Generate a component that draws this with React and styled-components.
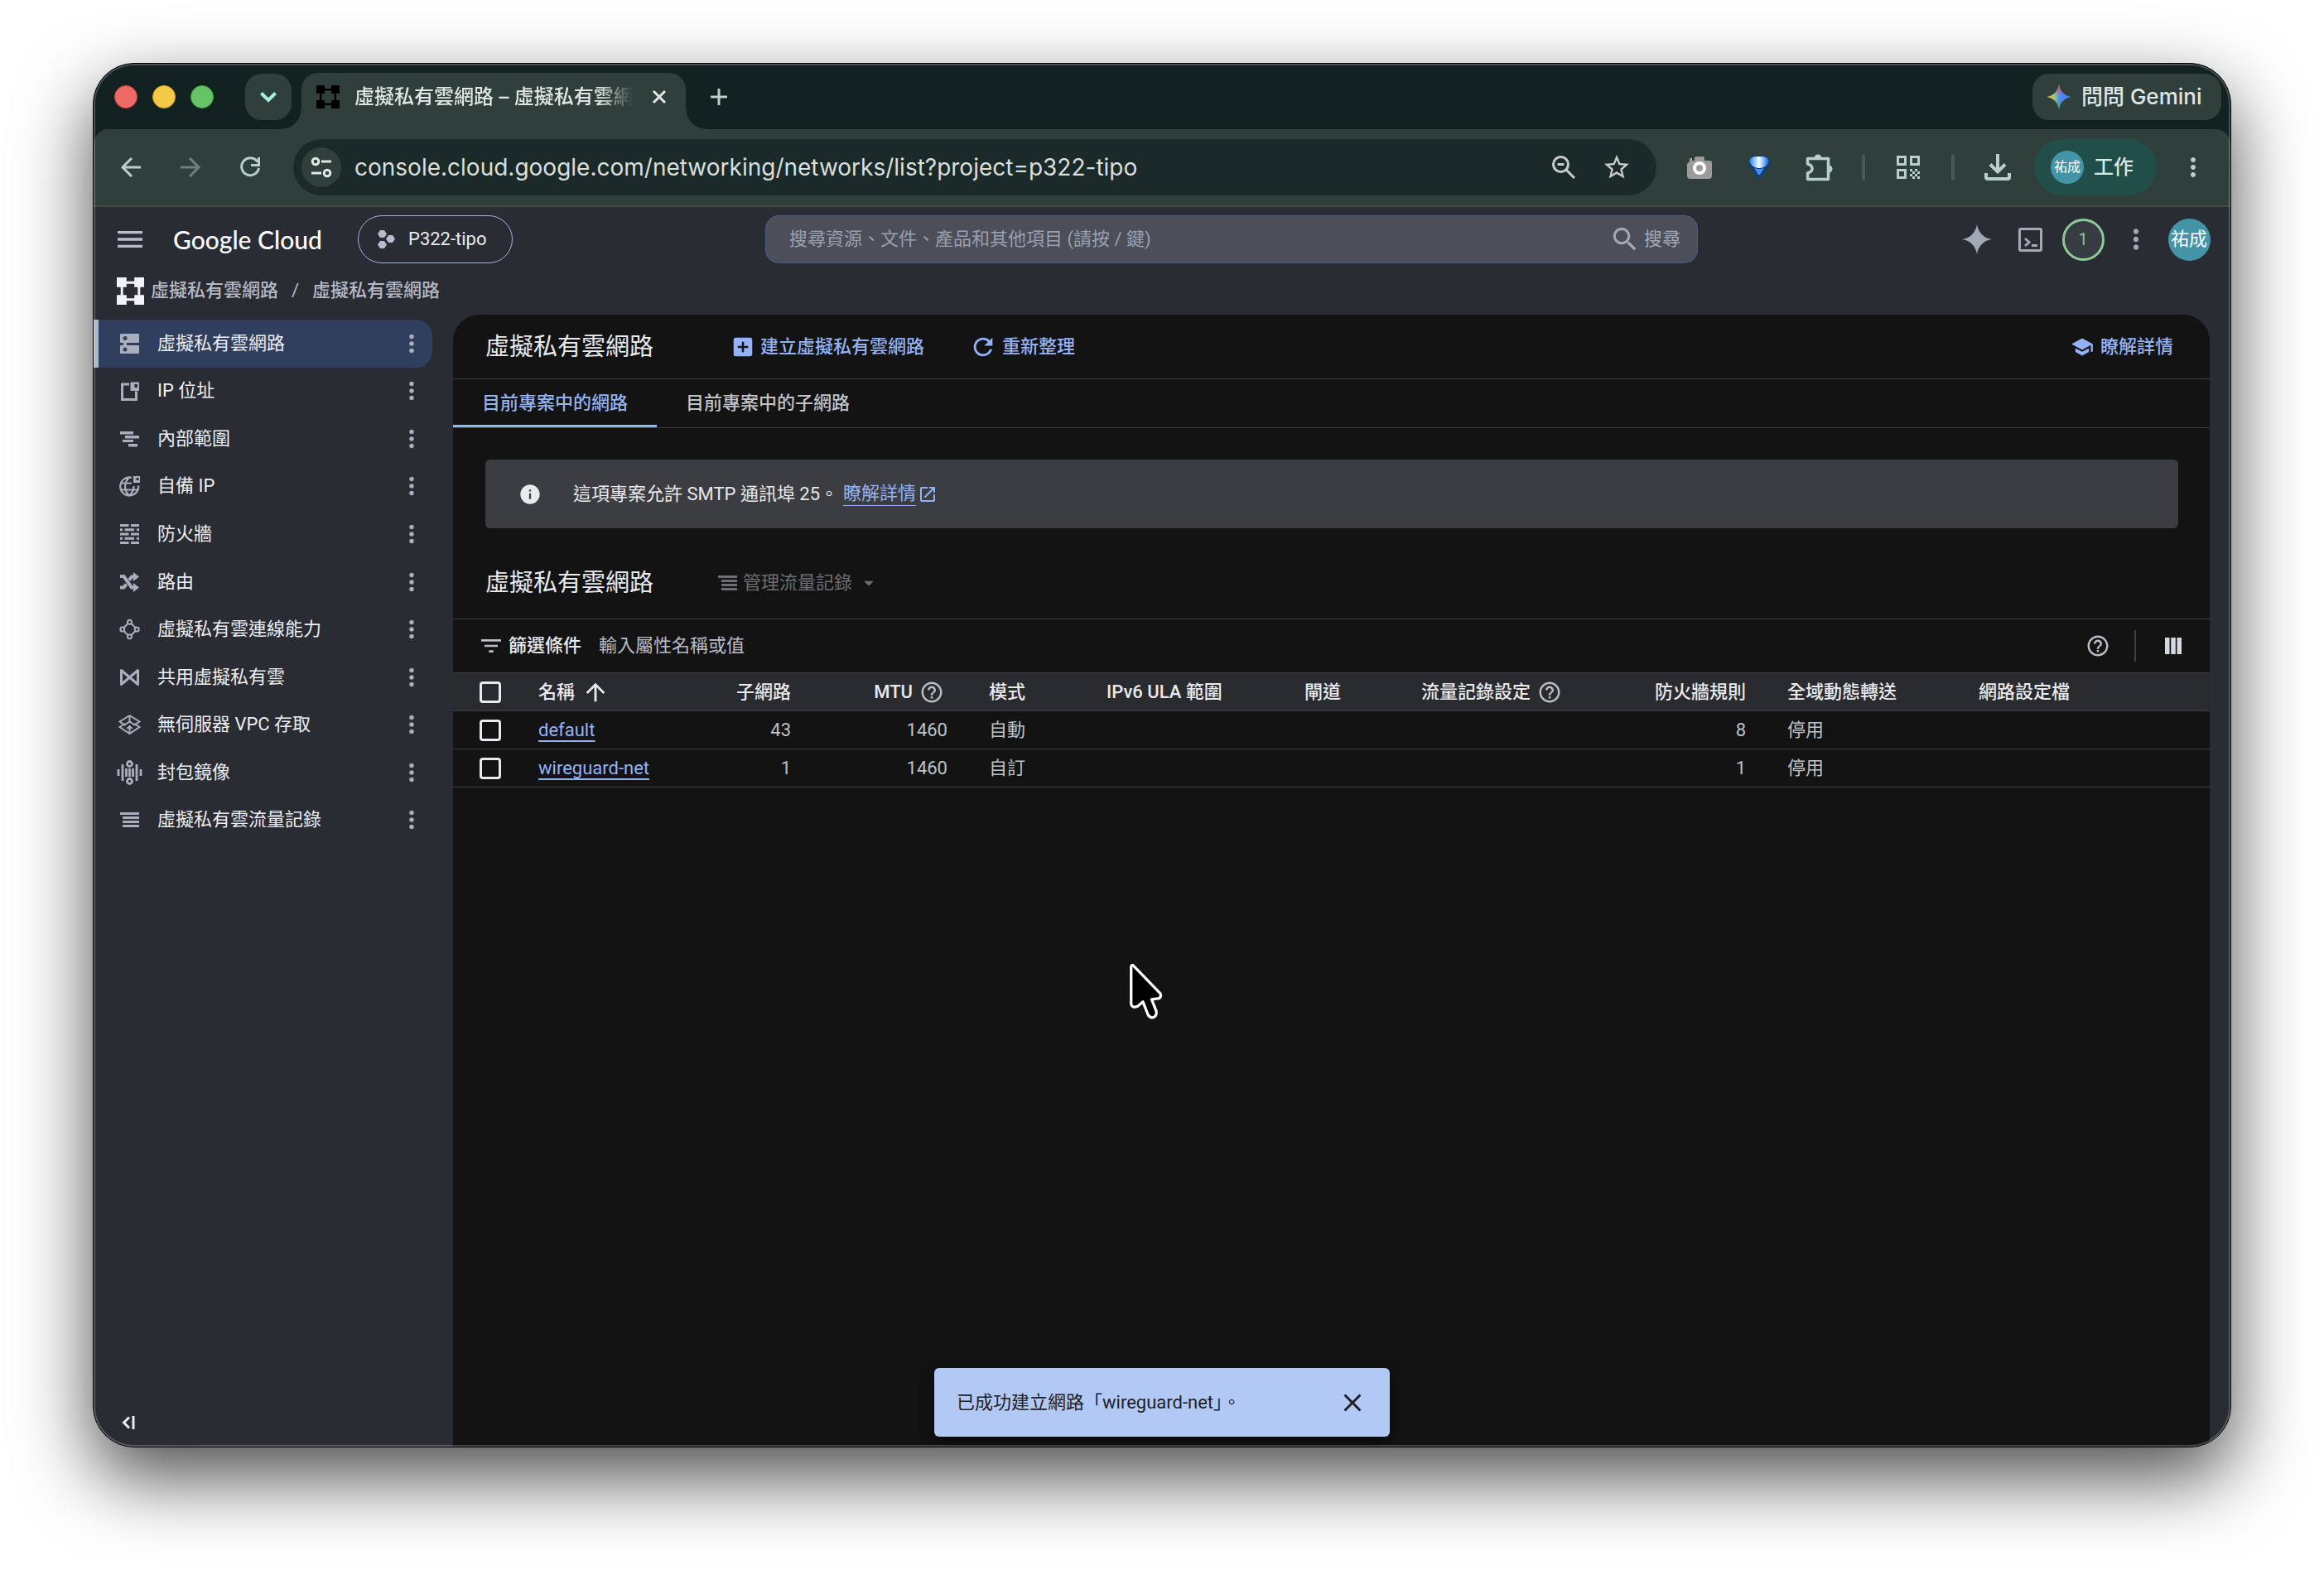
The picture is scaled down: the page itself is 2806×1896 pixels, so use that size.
import React from 'react';
import styled, { createGlobalStyle, css } from 'styled-components';
import {
  MdAddBox,
  MdArrowDropDown,
  MdArrowUpward,
  MdClose,
  MdFilterList,
  MdHelpOutline,
  MdInfo,
  MdMenu,
  MdMoreVert,
  MdOpenInNew,
  MdRefresh,
  MdSchool,
  MdSearch,
  MdStarOutline,
} from 'react-icons/md';

const GlobalStyle = createGlobalStyle`
  * {
    box-sizing: border-box;
  }
  body {
    margin: 0;
    background: #ffffff;
    font-family: Roboto, 'Noto Sans CJK TC', sans-serif;
    font-size: 22px;
    line-height: 32px;
    color: #e8eaed;
  }
  button, input {
    font: inherit;
    color: inherit;
    background: none;
    border: 0;
    padding: 0;
    margin: 0;
    outline: none;
  }
  button {
    cursor: pointer;
  }
  svg {
    display: block;
    flex: none;
  }
`;

/* ---------- icons ---------- */

const VpcIcon = ({ size }) => (
  <svg width={size} height={size} viewBox="0 0 28 28" fill="currentColor">
    <path d="M0 0h10v4h8V0h10v10h-4v8h4v10H18v-4h-8v4H0V18h4v-8H0zM10 6.500v3.500H6.500v8H10v3.500h8V18h3.500v-8H18V6.500z" fillRule="evenodd" />
  </svg>
);

const ChevronIcon = () => (
  <svg width="20" height="14" viewBox="0 0 20 14" fill="none" stroke="#a5f0e2" strokeWidth="4">
    <path d="M1.500 2.500 10 11l8.500-8.500" />
  </svg>
);

const PlusIcon = () => (
  <svg width="22" height="22" viewBox="0 0 22 22" fill="none" stroke="#b9cdc9" strokeWidth="3">
    <path d="M11 1v20M1 11h20" />
  </svg>
);

const CrossIcon = () => (
  <svg width="18" height="18" viewBox="0 0 18 18" fill="none" stroke="#e1e6e4" strokeWidth="3">
    <path d="m2 2 14 14M16 2 2 16" />
  </svg>
);

const sparkPath = 'M18 0c1.500 9.500 8 16.500 18 18-10 1.500-16.500 8.500-18 18C16.500 26.500 10 19.500 0 18 10 16.500 16.500 9.500 18 0z';

const SparkIcon = () => (
  <svg width="36" height="36" viewBox="0 0 36 36" fill="currentColor">
    <path d={sparkPath} />
  </svg>
);

const GeminiIcon = () => (
  <svg width="30" height="30" viewBox="0 0 36 36">
    <defs>
      <linearGradient id="sparkBase" x1="0" y1="0.500" x2="1" y2="0.500">
        <stop offset="0" stopColor="#fbbc04" />
        <stop offset="0.300" stopColor="#9ccb7a" />
        <stop offset="0.550" stopColor="#4f86f7" />
        <stop offset="1" stopColor="#3f7cf5" />
      </linearGradient>
      <linearGradient id="sparkTop" x1="0" y1="0" x2="0" y2="1">
        <stop offset="0" stopColor="#f2453c" />
        <stop offset="0.420" stopColor="#f2453c" stopOpacity="0" />
      </linearGradient>
      <linearGradient id="sparkBottom" x1="0" y1="1" x2="0" y2="0">
        <stop offset="0" stopColor="#34a853" />
        <stop offset="0.400" stopColor="#34a853" stopOpacity="0" />
      </linearGradient>
    </defs>
    <path d={sparkPath} fill="url(#sparkBase)" />
    <path d={sparkPath} fill="url(#sparkTop)" />
    <path d={sparkPath} fill="url(#sparkBottom)" />
  </svg>
);

const BackIcon = () => (
  <svg width="26" height="24" viewBox="0 0 26 24" fill="none" stroke="currentColor" strokeWidth="3">
    <path d="M25 12H3M14 1 3 12l11 11" />
  </svg>
);

const ForwardIcon = () => (
  <svg width="26" height="24" viewBox="0 0 26 24" fill="none" stroke="currentColor" strokeWidth="3">
    <path d="M1 12h22M12 1l11 11-11 11" />
  </svg>
);

const ReloadIcon = () => (
  <svg width="26" height="26" viewBox="0 0 26 26" fill="none" stroke="currentColor" strokeWidth="3">
    <path d="M22 6.500A10.500 10.500 0 1 0 23.500 14M23.500 1v9.500H14" />
  </svg>
);

const TuneIcon = () => (
  <svg width="26" height="26" viewBox="0 0 26 26" fill="none" stroke="#e1e6e4" strokeWidth="3">
    <circle cx="6" cy="6" r="3.800" />
    <path d="M13 6h12M1 20h12" />
    <circle cx="20" cy="20" r="3.800" />
  </svg>
);

const ZoomOutIcon = () => (
  <svg width="28" height="28" viewBox="0 0 28 28" fill="none" stroke="#c7cac8" strokeWidth="3">
    <circle cx="10.500" cy="10.500" r="9" />
    <path d="M17 17l10 10M6.500 10.500h8" />
  </svg>
);

const CameraIcon = () => (
  <svg width="32" height="28" viewBox="0 0 32 28">
    <path fill="#9b9c9c" d="M4 3h3v3h3V3q0-2 2-2h8q2 0 2 2v3h6q3 0 3 3v15q0 4-4 4H5q-4 0-4-4V10l3-3z" />
    <circle cx="16" cy="15" r="6" fill="#9b9c9c" stroke="#ffffff" strokeWidth="4" />
  </svg>
);

const BalloonIcon = () => (
  <svg width="28" height="30" viewBox="0 0 28 30">
    <defs>
      <linearGradient id="balloon" x1="0" y1="0" x2="1" y2="0">
        <stop offset="0" stopColor="#1f74dc" />
        <stop offset="0.250" stopColor="#8fc6fb" />
        <stop offset="0.500" stopColor="#f4faff" />
        <stop offset="0.700" stopColor="#8cc6fa" />
        <stop offset="1" stopColor="#1258c4" />
      </linearGradient>
    </defs>
    <path fill="#0d3a86" d="M1 8C1 3 7 1 14 1s13 2 13 7c0 7-7 11-10 17l-1 4h-4l-1-4C8 19 1 15 1 8z" />
    <path fill="url(#balloon)" d="M2 8c0-5 6-6 12-6s12 1 12 6c-3 6-7 8-12 8S5 14 2 8z" />
    <path fill="#3d8ff0" d="M8 16q6 2 12 0l-5 8h-2z" />
  </svg>
);

const PuzzleIcon = () => (
  <svg width="34" height="34" viewBox="0 0 34 34" fill="none" stroke="#b9cdc9" strokeWidth="3.500" strokeLinejoin="round">
    <path d="M3.500 6.500h25v25h-25v-7.500q5.500-1.500 5.500-5.500t-5.500-5.500z" />
    <path fill="#b9cdc9" stroke="none" d="M11.500 6a4.500 4.500 0 0 1 9 0zM29 14.500a4.500 4.500 0 0 1 0 9z" />
  </svg>
);

const QrIcon = () => (
  <svg width="28" height="28" viewBox="0 0 28 28" fill="#b9cdc9">
    <path fillRule="evenodd" d="M0 0h12v12H0zM3 3v6h6V3zM16 0h12v12H16zM19 3v6h6V3zM0 16h12v12H0zM3 19v6h6v-6z" />
    <path d="M16 16h3v3h-3zM22 16h3v3h-3zM19 19h3v3h-3zM25 19h3v3h-3zM16 22h3v3h-3zM22 22h3v3h-3zM19 25h3v3h-3zM25 25h3v3h-3z" />
  </svg>
);

const DownloadIcon = () => (
  <svg width="32" height="32" viewBox="0 0 32 32" fill="none" stroke="#b9cdc9" strokeWidth="4">
    <path d="M16 0v21M7 12.500l9 9 9-9M2 23v5q0 2 2 2h24q2 0 2-2v-5" />
  </svg>
);

const ProjectIcon = () => (
  <svg width="21" height="24" viewBox="0 0 21 24" fill="#b8bccb">
    <path d="M3 1h5l3 4.500L8 10H3L0 5.500zM3 14h5l3 4.500L8 23H3l-3-4.500zM13 7h5l3 4.500-3 4.500h-5l-3-4.500z" />
  </svg>
);

const ShellIcon = () => (
  <svg width="29" height="29" viewBox="0 0 29 29" fill="none" stroke="currentColor" strokeWidth="3">
    <rect x="1.500" y="1.500" width="26" height="26" rx="1.500" />
    <path d="M8 13l5 4.500L8 22M16 21.500h7" />
  </svg>
);

const ListLinesIcon = () => (
  <svg width="24" height="24" viewBox="0 0 24 24" fill="currentColor">
    <path d="M0 3h23v3H0zM4 8h19v3H4zM4 13h19v3H4zM4 18h19v3H4z" />
  </svg>
);

const ColumnsIcon = () => (
  <svg width="20" height="20" viewBox="0 0 20 20" fill="#d5d8de">
    <path d="M0 0h5.500v20H0zM7.300 0h5.500v20H7.300zM14.500 0H20v20h-5.500z" />
  </svg>
);

const CollapseIcon = () => (
  <svg width="16" height="16" viewBox="0 0 16 16" fill="none" stroke="#e8eaed" strokeWidth="3">
    <path d="M9 1.500 2.500 8 9 14.500M14 0v16" />
  </svg>
);

const PointerIcon = () => (
  <svg width="42" height="69" viewBox="644 80 102 170">
    <path
      d="M650 90q1-5 6-3l81 84q4 7-3 14l-23 3 14 36q2 14-10 18-11 1-15-9l-15-38-16 14q-15 6-19-6z"
      fill="#000000"
      stroke="#ffffff"
      strokeWidth="8"
      strokeLinejoin="round"
    />
  </svg>
);

const navIcons = {
  networks: <path fill="currentColor" fillRule="evenodd" d="M2 0h21q1 0 1 1v9q0 1-1 1H9v3h14q1 0 1 1v8q0 1-1 1H2q-1 0-1-1v-8q0-1 1-1h3v-3H2q-1 0-1-1V1q0-1 1-1zM7 3a2.500 2.500 0 1 0 0 5 2.500 2.500 0 0 0 0-5zM7 16.500a2.500 2.500 0 1 0 0 5 2.500 2.500 0 0 0 0-5z" />,
  addresses: (
    <>
      <path fill="none" stroke="currentColor" strokeWidth="3" d="M12 4H3.500v18.500h17V12.500" />
      <path fill="currentColor" fillRule="evenodd" d="M13.500 1.500H24V12H13.500zM18.500 4v4h3.500V4z" />
    </>
  ),
  ranges: <path fill="currentColor" d="M1 3h16v3.500H1zM7 8h17v3.500H7zM4 13h13v3H4zM11 18h11v3.500H11z" />,
  byoip: (
    <>
      <g fill="none" stroke="currentColor" strokeWidth="2.200">
        <path d="M15 1.800A11 11 0 1 0 23.200 11.500M3 8.500h12M3 16.500h19M12 1.500c-6.500 6-6.500 16 0 22 4.500-4 5.500-7.500 5.500-11.500" />
      </g>
      <path fill="currentColor" fillRule="evenodd" d="M17 0h8v8h-8zM20.500 2v3h3V2z" />
    </>
  ),
  firewall: <path fill="currentColor" d="M1 0h10.500v3H1zM14 0h10v3H14zM1 5.200h3v3H1zM6.500 5.200H18v3H6.500zM21 5.200h3v3h-3zM1 10.500h10.500v3H1zM14 10.500h10v3H14zM1 15.700h3v3H1zM6.500 15.700H18v3H6.500zM21 15.700h3v3h-3zM1 21h10.500v3H1zM14 21h10v3H14z" />,
  routes: (
    <g fill="none" stroke="currentColor" strokeWidth="4">
      <path d="M1 5h4.500l9.500 13.500h3M1 18.500h4.500l3-4M12 9.500 15 5.500h4" />
      <path fill="currentColor" stroke="none" d="M17 0l7 5.500-7 5.500zM17 13l7 5.500-7 5.500z" />
    </g>
  ),
  connectivity: (
    <g fill="none" stroke="currentColor" strokeWidth="2">
      <circle cx="12.500" cy="3.300" r="2.500" />
      <circle cx="12.500" cy="20.700" r="2.500" />
      <circle cx="3.800" cy="12" r="2.500" />
      <circle cx="21.200" cy="12" r="2.500" />
      <path d="M5.500 10 10.500 5M14.500 5l5 5M5.500 14l5 5M14.500 19l5-5" />
    </g>
  ),
  shared: <path fill="none" stroke="currentColor" strokeWidth="3" strokeLinejoin="round" d="M2.500 3.500v17l20-17v17z" />,
  serverless: (
    <g fill="none" stroke="currentColor" strokeWidth="2">
      <path d="M7 11 0.500 15l12 8 12-8L18 11M12.500 1 0.500 8.500l7 4.500M12.500 1l12 7.500-7 4.500M12.500 1v7.500M7 12l5.500-3.500L18 12M12.500 22v-8M9.500 17l3-3 3 3" />
    </g>
  ),
  mirroring: (
    <g fill="none" stroke="currentColor" strokeWidth="2.800">
      <circle cx="12.500" cy="1.500" r="3" />
      <circle cx="12.500" cy="22.500" r="3" />
      <path d="M-1 8v8M4 2v20M8.500 7v10M12.500 7v10M16.500 7v10M21 2v20M26 8v8" />
    </g>
  ),
  logs: <path fill="currentColor" d="M1 3h23v3H1zM4 8h20v3H4zM4 13h20v3H4zM4 18h20v3H4z" />,
};

/* ---------- window and tab strip ---------- */

const Desktop = styled.div`
  min-height: 100vh;
  padding: 76px 112px 148px;
  display: flex;
`;

const Window = styled.div`
  position: relative;
  flex: 1;
  min-width: 0;
  display: flex;
  flex-direction: column;
  border: 1px solid #000000;
  border-radius: 50px;
  background: #112220;
  box-shadow: 0 36px 90px rgba(0, 0, 0, 0.7);
  overflow: hidden;
  &::after {
    content: '';
    position: absolute;
    inset: 0;
    border: 2px solid rgba(255, 255, 255, 0.22);
    border-radius: 49px;
    pointer-events: none;
  }
`;

const TabStrip = styled.div`
  display: flex;
  align-items: center;
  height: 79px;
  padding: 0 11px 0 25px;
`;

const Lights = styled.div`
  display: flex;
  gap: 18px;
`;

const Light = styled.button`
  width: 28px;
  height: 28px;
  border-radius: 50%;
  border: 1px solid ${(p) => p.$edge};
  background: ${(p) => p.$color};
`;

const TabSearch = styled.button`
  width: 56px;
  height: 56px;
  margin: 0 12px 0 38px;
  border-radius: 20px;
  background: #2f403c;
  display: flex;
  align-items: center;
  justify-content: center;
`;

const flare = css`
  content: '';
  position: absolute;
  bottom: 0;
  width: 24px;
  height: 24px;
`;

const BrowserTab = styled.div`
  position: relative;
  align-self: flex-end;
  width: 464px;
  height: 68px;
  padding: 0 20px 10px 18px;
  display: flex;
  align-items: center;
  border-radius: 20px 20px 0 0;
  background: #2f403c;
  color: #000000;
  &::before {
    ${flare}
    left: -24px;
    background: radial-gradient(circle at 0 0, transparent 23px, #2f403c 24px);
  }
  &::after {
    ${flare}
    right: -24px;
    background: radial-gradient(circle at 100% 0, transparent 23px, #2f403c 24px);
  }
`;

const BrowserTabTitle = styled.span`
  flex: 1;
  min-width: 0;
  margin: 0 20px 0 18px;
  overflow: hidden;
  white-space: nowrap;
  font-family: Inter, 'Noto Sans CJK TC', sans-serif;
  font-size: 24px;
  font-weight: 500;
  color: #e1e6e4;
  mask-image: linear-gradient(90deg, #000 88%, transparent 100%);
`;

const PlainButton = styled.button`
  width: ${(p) => p.$w || 28}px;
  height: ${(p) => p.$h || p.$w || 28}px;
  flex: none;
  display: flex;
  align-items: center;
  justify-content: center;
  color: ${(p) => p.$color || 'inherit'};
`;

const NewTab = styled(PlainButton)`
  margin: 0 auto 0 26px;
`;

const GeminiButton = styled.button`
  width: 228px;
  height: 56px;
  padding: 0 17px;
  display: flex;
  align-items: center;
  gap: 12px;
  border-radius: 20px;
  background: #2f403c;
  color: #e1e6e4;
  font-family: Inter, 'Noto Sans CJK TC', sans-serif;
  font-size: 26px;
  font-weight: 500;
  white-space: nowrap;
`;

/* ---------- address toolbar ---------- */

const Toolbar = styled.div`
  display: flex;
  align-items: center;
  gap: 16px;
  height: 94px;
  padding: 0 17px;
  border-bottom: 2px solid #444b47;
  border-radius: 18px 18px 0 0;
  background: #2f403c;
  color: #b9cdc9;
`;

const AddressBar = styled.div`
  flex: 1;
  min-width: 0;
  height: 68px;
  margin: 0 8px;
  padding: 0 20px 0 10px;
  display: flex;
  align-items: center;
  gap: 8px;
  border-radius: 34px;
  background: #1a2a28;
  color: #c7cac8;
`;

const SiteInfo = styled(PlainButton)`
  border-radius: 50%;
  background: #2f403c;
`;

const UrlInput = styled.input`
  flex: 1;
  min-width: 0;
  height: 48px;
  margin-left: 8px;
  font-family: Inter, 'Noto Sans CJK TC', sans-serif;
  font-size: 28px;
  color: #dadfdd;
`;

const ToolbarRule = styled.span`
  width: 4px;
  height: 32px;
  margin: 0 8px;
  border-radius: 2px;
  background: #465955;
`;

const Avatar = styled.span`
  width: ${(p) => p.$size}px;
  height: ${(p) => p.$size}px;
  display: flex;
  align-items: center;
  justify-content: center;
  border-radius: 50%;
  background: #4394a7;
  color: #ffffff;
  font-size: ${(p) => (p.$size > 45 ? 22 : 16)}px;
  font-weight: 400;
`;

const ProfileChip = styled.button`
  width: 148px;
  height: 68px;
  padding-left: 20px;
  display: flex;
  align-items: center;
  gap: 12px;
  border-radius: 34px;
  background: #224e49;
  color: #d3ece6;
  font-size: 24px;
  font-weight: 500;
`;

/* ---------- console header ---------- */

const Console = styled.div`
  flex: 1;
  display: flex;
  flex-direction: column;
  background: #2a2c34;
`;

const HeaderRow = styled.header`
  display: grid;
  grid-template-columns: 811px minmax(0, 1fr) 643px;
  align-items: center;
  padding-top: 10px;
`;

const Brand = styled.div`
  display: flex;
  align-items: center;
  padding-left: 24px;
`;

const Logo = styled.a`
  width: 255px;
  padding-left: 32px;
  color: #ffffff;
  text-decoration: none;
  font-family: Lato, sans-serif;
  font-size: 30px;
  font-weight: 500;
  white-space: nowrap;
`;

const ProjectPicker = styled.button`
  width: 187px;
  height: 58px;
  padding-left: 23px;
  display: flex;
  align-items: center;
  gap: 16px;
  border: 1px solid #a5b2dc;
  border-radius: 29px;
`;

const SearchBox = styled.form`
  height: 58px;
  padding: 0 20px 0 28px;
  display: flex;
  align-items: center;
  border: 1px solid #4a5d87;
  border-radius: 16px;
  background: #4c4e5a;
  color: #a3a8b5;
`;

const SearchInput = styled.input`
  flex: 1;
  min-width: 0;
  &::placeholder {
    color: #9ba0ae;
    opacity: 1;
  }
`;

const SearchSubmit = styled.button`
  display: flex;
  align-items: center;
  gap: 4px;
`;

const HeaderTools = styled.div`
  display: flex;
  justify-content: flex-end;
  align-items: center;
  padding-right: 18px;
  color: #a3a8b5;
`;

const Notifications = styled.span`
  width: 51px;
  height: 51px;
  display: flex;
  align-items: center;
  justify-content: center;
  border: 3px solid #8ec99a;
  border-radius: 50%;
  background: #373b42;
  color: #8ec99a;
  font-size: 20px;
`;

const Breadcrumbs = styled.nav`
  height: 62px;
  padding: 4px 0 0 28px;
  display: flex;
  align-items: center;
  color: #b5b9c5;
  font-weight: 500;
  svg {
    margin-right: 8px;
    color: #f1f3f9;
  }
  a {
    color: inherit;
    text-decoration: none;
  }
  span {
    margin: 0 16px;
    font-weight: 400;
  }
`;

const Body = styled.div`
  flex: 1;
  display: flex;
  padding-right: 25px;
`;

/* ---------- sidebar ---------- */

const Sidebar = styled.aside`
  width: 434px;
  flex: none;
  padding: 6px 25px 5px 0;
  display: flex;
  flex-direction: column;
  justify-content: space-between;
`;

const NavList = styled.ul`
  height: 633px;
  margin: 0;
  padding: 0;
  list-style: none;
  display: flex;
  flex-direction: column;
  justify-content: space-between;
`;

const NavItem = styled.li`
  height: 58px;
  padding: 0 5px 0 22px;
  display: flex;
  align-items: center;
  border-left: 6px solid ${(p) => (p.$active ? '#a9b8d1' : 'transparent')};
  border-radius: 0 20px 20px 0;
  background: ${(p) => (p.$active ? '#303f5e' : 'none')};
  color: #a9afbc;
`;

const NavLink = styled.a`
  flex: 1;
  display: flex;
  align-items: center;
  gap: 18px;
  color: inherit;
  text-decoration: none;
  svg {
    margin: 0 4px 0 3px;
    overflow: visible;
  }
  span {
    color: #eceef3;
  }
`;

const CollapseButton = styled(PlainButton)`
  margin-left: 18px;
`;

/* ---------- content ---------- */

const Panel = styled.main`
  position: relative;
  flex: 1;
  min-width: 0;
  border-radius: 32px 32px 0 0;
  background: #131313;
`;

const PanelHeader = styled.div`
  height: 78px;
  padding: 0 44px 0 39px;
  display: flex;
  align-items: center;
  border-bottom: 1px solid #3c3d40;
`;

const Title = styled.h1`
  margin: 0;
  font-size: 29px;
  font-weight: 400;
  line-height: 40px;
`;

const ActionButton = styled.button`
  display: flex;
  align-items: center;
  gap: 6px;
  margin-left: ${(p) => p.$gap}px;
  color: #94b3f5;
  font-weight: 500;
  &:disabled {
    color: #6c6e72;
    font-weight: 400;
  }
`;

const LearnLink = styled.a`
  margin-left: auto;
  display: flex;
  align-items: center;
  gap: 8px;
  color: #94b3f5;
  text-decoration: none;
  font-weight: 500;
`;

const Tabs = styled.div`
  display: flex;
  height: 59px;
  border-bottom: 1px solid #3c3d40;
`;

const Tab = styled.button`
  padding: 0 35px;
  border-top: 3px solid transparent;
  border-bottom: 3px solid ${(p) => (p.$active ? '#94b3f5' : 'transparent')};
  color: ${(p) => (p.$active ? '#94b3f5' : '#c0c3c9')};
  font-weight: 500;
`;

const Notice = styled.div`
  height: 83px;
  margin: 38px 38px 0 39px;
  padding-left: 40px;
  display: flex;
  align-items: center;
  border-radius: 6px;
  background: #3c3d41;
  svg:first-child {
    margin-right: 38px;
  }
`;

const NoticeLink = styled.a`
  display: flex;
  align-items: center;
  gap: 2px;
  margin-left: 6px;
  color: #94b3f5;
  text-decoration: none;
  span {
    border-bottom: 1px solid #94b3f5;
    line-height: 28px;
  }
`;

const SectionHeader = styled.div`
  height: 86px;
  margin-top: 23px;
  padding-left: 39px;
  display: flex;
  align-items: center;
`;

const FilterBar = styled.div`
  height: 65px;
  padding: 0 30px;
  display: flex;
  align-items: center;
  border-top: 1px solid #3c3d40;
  color: #b9bdc4;
`;

const FilterLabel = styled.label`
  margin: 0 21px 0 5px;
  color: #e8eaed;
  font-weight: 500;
`;

const FilterInput = styled.input`
  flex: 1;
  min-width: 0;
  &::placeholder {
    color: #b9bdc4;
    opacity: 1;
  }
`;

const FilterRule = styled.span`
  width: 2px;
  height: 38px;
  margin: 0 31px 0 28px;
  background: #3c4043;
`;

const Table = styled.table`
  width: 100%;
  border-collapse: collapse;
  table-layout: fixed;
  tr {
    height: 46px;
  }
`;

const cell = css`
  padding: 0 25px;
  text-align: ${(p) => (p.$num ? 'right' : 'left')};
  white-space: nowrap;
`;

const HeadCell = styled.th`
  ${cell}
  border-top: 1px solid #3c3d40;
  border-bottom: 1px solid #3c3d40;
  background: #2a2b2f;
  color: #e8eaed;
  font-weight: 500;
`;

const Cell = styled.td`
  ${cell}
  border-bottom: 1px solid #3c3d40;
  color: #bdc1c8;
`;

const HeadLabel = styled.span`
  display: inline-flex;
  align-items: center;
  vertical-align: middle;
  gap: 8px;
  svg {
    margin-right: 4px;
  }
`;

const Checkbox = styled.input`
  appearance: none;
  display: block;
  width: 26px;
  height: 26px;
  margin-left: 7px;
  border: 3px solid #e8eaed;
  border-radius: 4px;
`;

const NameLink = styled.a`
  color: #94b3f5;
  text-decoration: underline;
  text-decoration-thickness: 2px;
  text-decoration-skip-ink: none;
  text-underline-offset: 5px;
`;

/* ---------- overlays ---------- */

const Pointer = styled.div`
  position: absolute;
  left: 816px;
  top: 783px;
`;

const Toast = styled.div`
  position: absolute;
  bottom: 12px;
  left: 50%;
  transform: translateX(-50%);
  width: 550px;
  height: 83px;
  padding: 0 30px 0 27px;
  display: flex;
  align-items: center;
  justify-content: space-between;
  border-radius: 6px;
  background: #b2c9f6;
  color: #202124;
  box-shadow: 0 6px 16px rgba(0, 0, 0, 0.6);
`;

const navItems = [
  { icon: 'networks', label: '虛擬私有雲網路', active: true },
  { icon: 'addresses', label: 'IP 位址' },
  { icon: 'ranges', label: '內部範圍' },
  { icon: 'byoip', label: '自備 IP' },
  { icon: 'firewall', label: '防火牆' },
  { icon: 'routes', label: '路由' },
  { icon: 'connectivity', label: '虛擬私有雲連線能力' },
  { icon: 'shared', label: '共用虛擬私有雲' },
  { icon: 'serverless', label: '無伺服器 VPC 存取' },
  { icon: 'mirroring', label: '封包鏡像' },
  { icon: 'logs', label: '虛擬私有雲流量記錄' },
];

const columns = [
  { key: 'name', label: '名稱', width: 215, sorted: true },
  { key: 'subnets', label: '子網路', width: 140, num: true },
  { key: 'mtu', label: 'MTU', width: 189, num: true, help: true },
  { key: 'mode', label: '模式', width: 142 },
  { key: 'ula', label: 'IPv6 ULA 範圍', width: 239 },
  { key: 'gateway', label: '閘道', width: 141 },
  { key: 'flowLogs', label: '流量記錄設定', width: 259, help: true },
  { key: 'rules', label: '防火牆規則', width: 183, num: true },
  { key: 'routing', label: '全域動態轉送', width: 231 },
  { key: 'profile', label: '網路設定檔' },
];

const networks = [
  { name: 'default', subnets: 43, mtu: 1460, mode: '自動', rules: 8, routing: '停用' },
  { name: 'wireguard-net', subnets: 1, mtu: 1460, mode: '自訂', rules: 1, routing: '停用' },
];

const BrowserChrome = () => (
  <>
    <TabStrip>
      <Lights>
        <Light $color="#ee6a66" $edge="#d9423f" aria-label="關閉視窗" />
        <Light $color="#f4c945" $edge="#dba520" aria-label="最小化" />
        <Light $color="#65c466" $edge="#3fa33f" aria-label="全螢幕" />
      </Lights>
      <TabSearch aria-label="搜尋分頁">
        <ChevronIcon />
      </TabSearch>
      <BrowserTab>
        <VpcIcon size={28} />
        <BrowserTabTitle>虛擬私有雲網路 – 虛擬私有雲網路</BrowserTabTitle>
        <PlainButton $w={24} aria-label="關閉分頁">
          <CrossIcon />
        </PlainButton>
      </BrowserTab>
      <NewTab aria-label="新分頁">
        <PlusIcon />
      </NewTab>
      <GeminiButton>
        <GeminiIcon />
        問問 Gemini
      </GeminiButton>
    </TabStrip>
    <Toolbar>
      <PlainButton $w={56} aria-label="返回"><BackIcon /></PlainButton>
      <PlainButton $w={56} $color="#6f7f7b" aria-label="前進"><ForwardIcon /></PlainButton>
      <PlainButton $w={56} aria-label="重新載入"><ReloadIcon /></PlainButton>
      <AddressBar>
        <SiteInfo $w={48} aria-label="網站資訊"><TuneIcon /></SiteInfo>
        <UrlInput
          aria-label="網址"
          defaultValue="console.cloud.google.com/networking/networks/list?project=p322-tipo"
        />
        <PlainButton $w={56} aria-label="縮放"><ZoomOutIcon /></PlainButton>
        <PlainButton $w={56} aria-label="加入書籤"><MdStarOutline size={36} /></PlainButton>
      </AddressBar>
      <PlainButton $w={56} aria-label="螢幕擷取"><CameraIcon /></PlainButton>
      <PlainButton $w={56} aria-label="氣球"><BalloonIcon /></PlainButton>
      <PlainButton $w={56} aria-label="擴充功能"><PuzzleIcon /></PlainButton>
      <ToolbarRule />
      <PlainButton $w={56} aria-label="QR 圖碼"><QrIcon /></PlainButton>
      <ToolbarRule />
      <PlainButton $w={56} aria-label="下載"><DownloadIcon /></PlainButton>
      <ProfileChip>
        <Avatar $size={40}>祐成</Avatar>
        工作
      </ProfileChip>
      <PlainButton $w={56} aria-label="選單"><MdMoreVert size={36} /></PlainButton>
    </Toolbar>
  </>
);

const ConsoleHeader = () => (
  <>
    <HeaderRow>
      <Brand>
        <PlainButton $w={40} $color="#b8bccb" aria-label="導覽選單"><MdMenu size={40} /></PlainButton>
        <Logo href="#">Google Cloud</Logo>
        <ProjectPicker>
          <ProjectIcon />
          P322-tipo
        </ProjectPicker>
      </Brand>
      <SearchBox>
        <SearchInput aria-label="搜尋" placeholder="搜尋資源、文件、產品和其他項目 (請按 / 鍵)" />
        <SearchSubmit type="button">
          <MdSearch size={38} />
          搜尋
        </SearchSubmit>
      </SearchBox>
      <HeaderTools>
        <PlainButton $w={64} $h={56} aria-label="Gemini"><SparkIcon /></PlainButton>
        <PlainButton $w={64} $h={56} aria-label="Cloud Shell"><ShellIcon /></PlainButton>
        <PlainButton $w={64} $h={56}><Notifications>1</Notifications></PlainButton>
        <PlainButton $w={64} $h={56} aria-label="更多"><MdMoreVert size={38} /></PlainButton>
        <PlainButton $w={64} $h={56}><Avatar $size={51}>祐成</Avatar></PlainButton>
      </HeaderTools>
    </HeaderRow>
    <Breadcrumbs>
      <VpcIcon size={33} />
      <a href="#">虛擬私有雲網路</a>
      <span>/</span>
      <a href="#">虛擬私有雲網路</a>
    </Breadcrumbs>
  </>
);

const NetworkTable = () => (
  <Table>
    <colgroup>
      <col width={78} />
      {columns.map((col) => (
        <col key={col.key} width={col.width} />
      ))}
    </colgroup>
    <thead>
      <tr>
        <HeadCell>
          <Checkbox type="checkbox" aria-label="全選" />
        </HeadCell>
        {columns.map((col) => (
          <HeadCell key={col.key} $num={col.num}>
            <HeadLabel>
              {col.label}
              {col.sorted && <MdArrowUpward size={34} />}
              {col.help && <MdHelpOutline size={30} color="#b9bdc4" />}
            </HeadLabel>
          </HeadCell>
        ))}
      </tr>
    </thead>
    <tbody>
      {networks.map((network) => (
        <tr key={network.name}>
          <Cell>
            <Checkbox type="checkbox" aria-label={network.name} />
          </Cell>
          {columns.map((col) => (
            <Cell key={col.key} $num={col.num}>
              {col.key === 'name' ? <NameLink href="#">{network.name}</NameLink> : network[col.key]}
            </Cell>
          ))}
        </tr>
      ))}
    </tbody>
  </Table>
);

const App = () => (
  <>
    <GlobalStyle />
    <Desktop>
      <Window>
        <BrowserChrome />
        <Console>
          <ConsoleHeader />
          <Body>
            <Sidebar>
              <NavList>
                {navItems.map((item) => (
                  <NavItem key={item.label} $active={item.active}>
                    <NavLink href="#">
                      <svg width="24" height="24" viewBox="0 0 24 24">{navIcons[item.icon]}</svg>
                      <span>{item.label}</span>
                    </NavLink>
                    <PlainButton $w={40} aria-label={`${item.label} 選單`}><MdMoreVert size={34} /></PlainButton>
                  </NavItem>
                ))}
              </NavList>
              <CollapseButton $w={48} aria-label="收合"><CollapseIcon /></CollapseButton>
            </Sidebar>
            <Panel>
              <PanelHeader>
                <Title>虛擬私有雲網路</Title>
                <ActionButton $gap={93}><MdAddBox size={30} />建立虛擬私有雲網路</ActionButton>
                <ActionButton $gap={54}><MdRefresh size={34} />重新整理</ActionButton>
                <LearnLink href="#"><MdSchool size={28} />瞭解詳情</LearnLink>
              </PanelHeader>
              <Tabs>
                <Tab $active>目前專案中的網路</Tab>
                <Tab>目前專案中的子網路</Tab>
              </Tabs>
              <Notice>
                <MdInfo size={28} />
                這項專案允許 SMTP 通訊埠 25。
                <NoticeLink href="#"><span>瞭解詳情</span><MdOpenInNew size={24} /></NoticeLink>
              </Notice>
              <SectionHeader>
                <Title as="h2">虛擬私有雲網路</Title>
                <ActionButton $gap={78} disabled>
                  <ListLinesIcon />管理流量記錄<MdArrowDropDown size={28} />
                </ActionButton>
              </SectionHeader>
              <FilterBar>
                <MdFilterList size={32} />
                <FilterLabel htmlFor="filter">篩選條件</FilterLabel>
                <FilterInput id="filter" placeholder="輸入屬性名稱或值" />
                <PlainButton $w={32} aria-label="說明"><MdHelpOutline size={30} /></PlainButton>
                <FilterRule />
                <PlainButton $w={28} aria-label="欄"><ColumnsIcon /></PlainButton>
              </FilterBar>
              <NetworkTable />
              <Pointer><PointerIcon /></Pointer>
            </Panel>
          </Body>
        </Console>
        <Toast role="status">
          已成功建立網路「wireguard-net」。
          <PlainButton $w={30} aria-label="關閉"><MdClose size={36} /></PlainButton>
        </Toast>
      </Window>
    </Desktop>
  </>
);

export default App;
